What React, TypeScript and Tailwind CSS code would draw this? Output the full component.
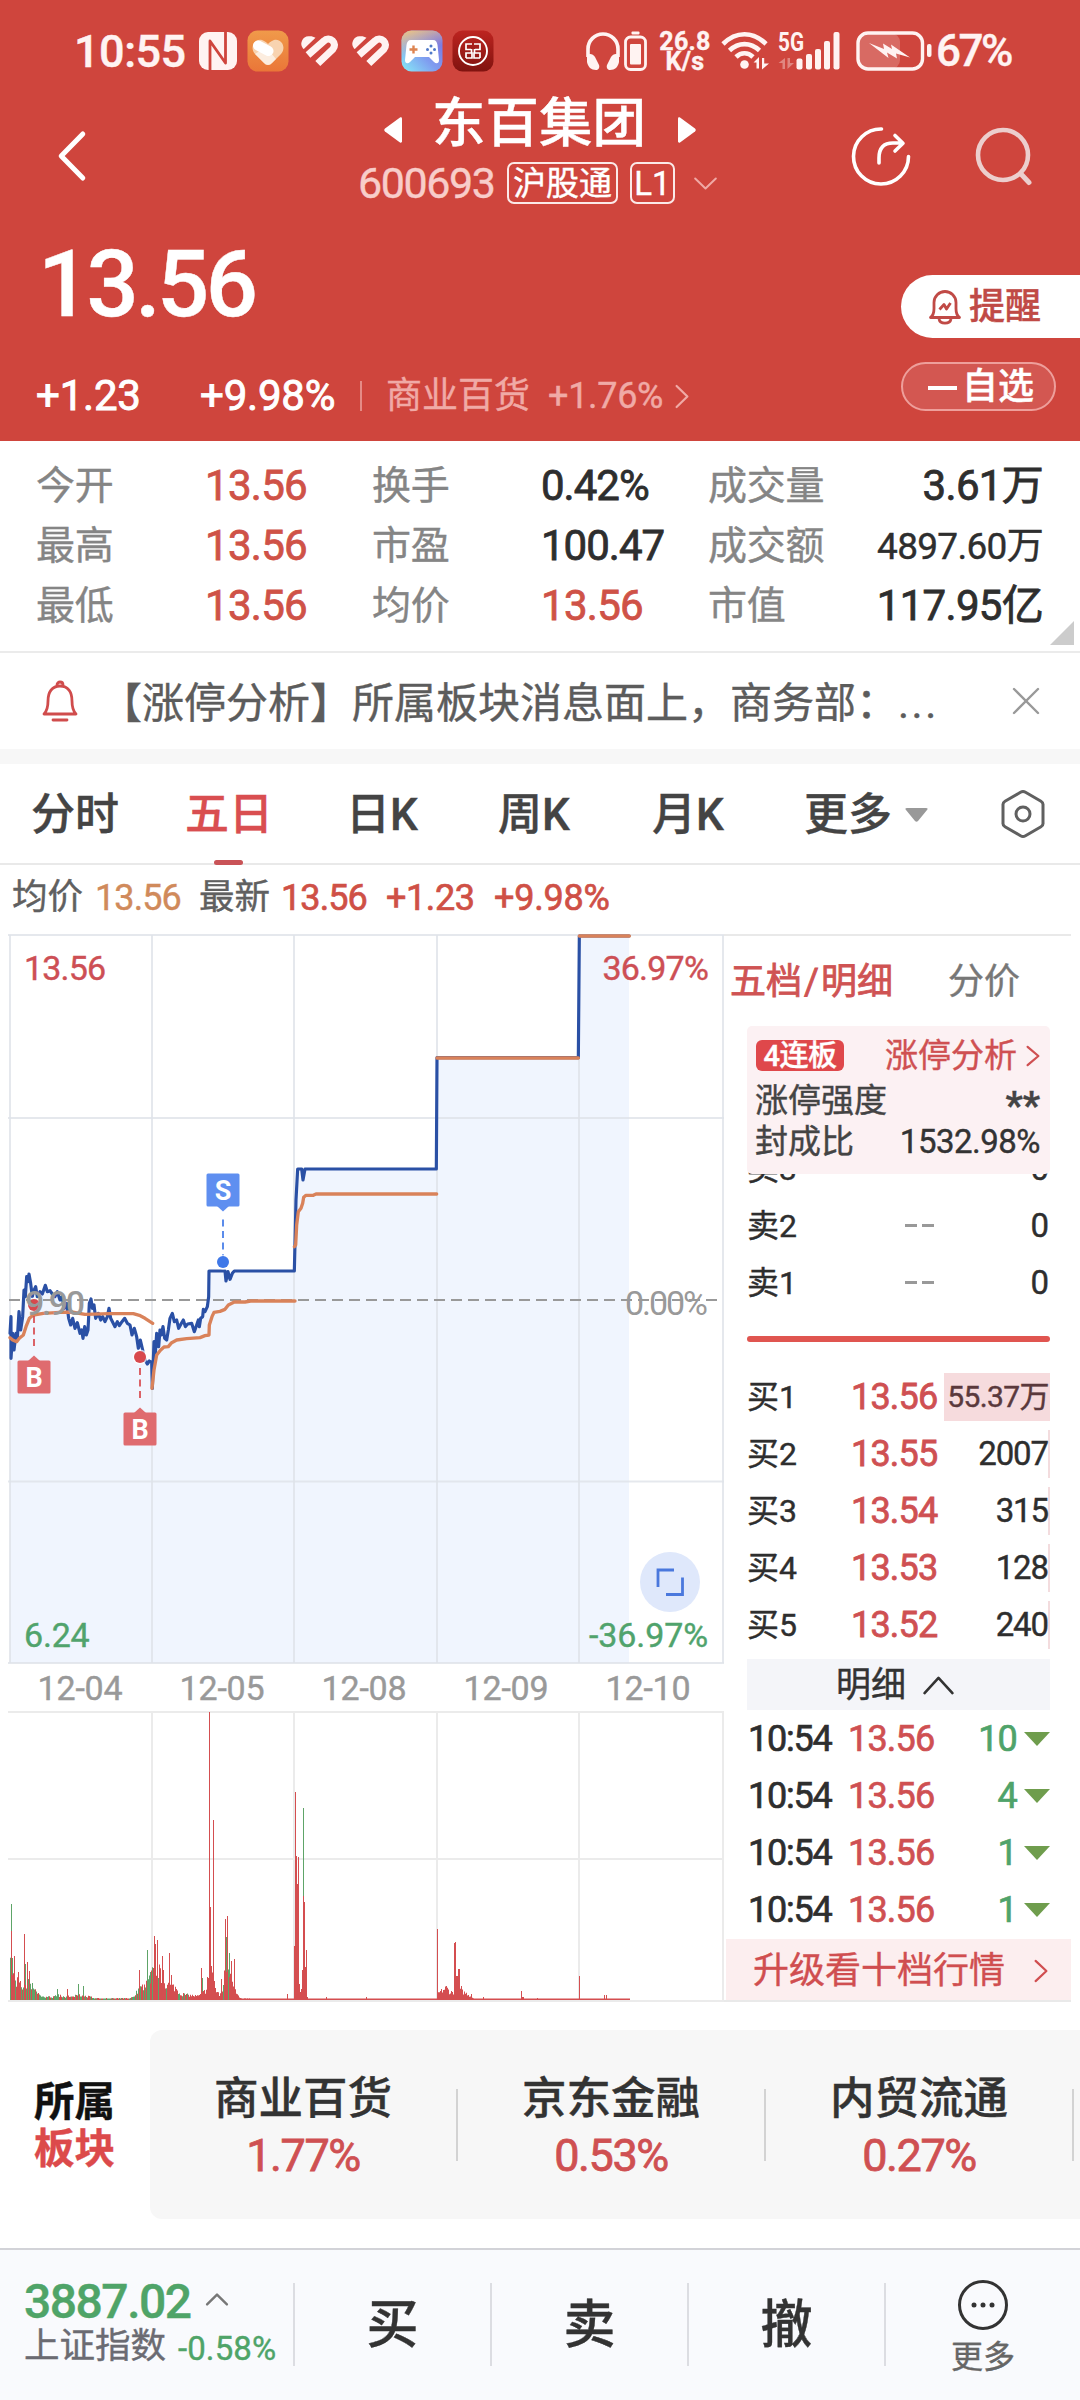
import React from "react";

/* ---------- status bar icons ---------- */

function NfcIcon() {
  return (
    <svg className="ml-[2px] h-[40px] w-[40px]" viewBox="0 0 40 40">
      <rect x="1" y="1" width="38" height="38" rx="9" fill="#fff3f2" />
      <path d="M12 40V10l15.500 22V0" fill="none" stroke="#cf453d" strokeWidth="2.800" strokeLinejoin="round" />
    </svg>
  );
}

function HeartAppIcon() {
  return (
    <svg className="ml-[9px] h-[42px] w-[42px]" viewBox="0 0 42 42">
      <defs>
        <linearGradient id="or" x1="0" y1="0" x2="0" y2="1">
          <stop offset="0" stopColor="#f09a4a" />
          <stop offset="1" stopColor="#ea7638" />
        </linearGradient>
      </defs>
      <rect x="0.500" y="0.500" width="41" height="41" rx="10" fill="url(#or)" />
      <path d="M21 35c-2 0-3-1-4-2L8 24c-6-7 0-16 7-14 3 1 5 3 6 4 1-1 3-3 6-4 7-2 13 7 7 14l-9 9c-1 1-2 2-4 2z" fill="#f8d3b0" />
      <path d="M8 24l9 9c2.500 2.500 5.500 2.500 8 0l4-4-10-12z" fill="#fff" opacity="0.600" />
      <path d="M11 15.500L21.500 21" stroke="#fff" strokeWidth="10" strokeLinecap="round" />
    </svg>
  );
}

function StripeHeart({ className }: { className: string }) {
  return (
    <svg className={className} viewBox="0 0 38 32">
      <path d="M2 13.500A7.500 7.500 0 0 1 7.500 1.300C10 0.800 12.500 1.500 14.500 2.800L2.800 14z" fill="#fff3f2" />
      <path d="M7 20L23 6A5.800 5.800 0 0 1 31.800 14.300L16.800 28.500" fill="none" stroke="#fff3f2" strokeWidth="7.200" />
    </svg>
  );
}

function GameIcon() {
  return (
    <svg className="ml-[11px] h-[42px] w-[42px]" viewBox="0 0 42 42">
      <defs>
        <linearGradient id="gm" x1="0.100" y1="1" x2="0.900" y2="0.200">
          <stop offset="0" stopColor="#86e4f6" />
          <stop offset="0.500" stopColor="#7f9df0" />
          <stop offset="1" stopColor="#7a78e2" />
        </linearGradient>
        <linearGradient id="gt" x1="0" y1="0" x2="0.300" y2="1">
          <stop offset="0" stopColor="#f3c67a" />
          <stop offset="0.600" stopColor="#eec49a" stopOpacity="0" />
        </linearGradient>
      </defs>
      <rect x="0.500" y="0.500" width="41" height="41" rx="10" fill="url(#gm)" />
      <rect x="0.500" y="0.500" width="41" height="41" rx="10" fill="url(#gt)" />
      <path d="M10 10h22c3 0 4 2 4.500 5L38 30c0 4-3 4-5 2l-5-5H14l-5 5c-2 2-5 2-5-2l1.500-15C6 12 7 10 10 10z" fill="#fff" />
      <path d="M12.500 15.500v8M8.500 19.500h8" stroke="#dd8450" strokeWidth="2.400" />
      <g fill="#4f78c8">
        <circle cx="30" cy="16" r="1.500" />
        <circle cx="30" cy="23" r="1.500" />
        <circle cx="26.500" cy="19.500" r="1.500" />
        <circle cx="33.500" cy="19.500" r="1.500" />
      </g>
    </svg>
  );
}

function BankIcon() {
  return (
    <svg className="ml-[9px] h-[42px] w-[42px]" viewBox="0 0 42 42">
      <defs>
        <linearGradient id="bk" x1="0" y1="0" x2="0" y2="1">
          <stop offset="0" stopColor="#bd2420" />
          <stop offset="1" stopColor="#80130f" />
        </linearGradient>
      </defs>
      <rect x="0.500" y="0.500" width="41" height="41" rx="10" fill="url(#bk)" />
      <circle cx="21" cy="21" r="14" fill="none" stroke="#fff" strokeWidth="1.900" />
      <path d="M20 14h-6v5.500h5M14 28h6v-5h-6v5M22 14h6v5.500h-5M28 28h-6v-5h6v5M19.500 19v4M22.500 19v4" fill="none" stroke="#fff" strokeWidth="1.700" />
    </svg>
  );
}

function StatusRight() {
  return (
    <>
      <svg className="ml-[91px] h-[40px] w-[36px]" viewBox="0 0 36 40">
        <path d="M3 26V18a15 15 0 0 1 30 0v8" fill="none" stroke="#fff3f2" strokeWidth="3.600" />
        <path d="M2 24c3-2 6-1 8 2l4 8c1 3-1 5-3 5-5 0-8-3-9-8z" fill="#fff3f2" />
        <path d="M34 24c-3-2-6-1-8 2l-4 8c-1 3 1 5 3 5 5 0 8-3 9-8z" fill="#fff3f2" />
      </svg>
      <svg className="ml-[3px] h-[40px] w-[23px]" viewBox="0 0 23 40">
        <rect x="7.500" y="0.500" width="8" height="3" rx="1" fill="#fff3f2" />
        <rect x="1.500" y="6" width="20" height="32.500" rx="5" fill="none" stroke="#fff3f2" strokeWidth="2.800" />
        <rect x="6" y="13" width="11" height="20.500" rx="1" fill="#fff3f2" />
      </svg>
      <div className="ml-[11px] w-[54px] pt-[2px] text-center text-[25px] font-bold leading-[20px] tracking-[0.300px] text-[#fff3f2]">
        <div>26.8</div>
        <div>K/s</div>
      </div>
      <svg className="ml-[8px] h-[40px] w-[50px]" viewBox="0 0 50 40">
        <g fill="none" stroke="#fff3f2" strokeWidth="4.600">
          <path d="M3 13C16 0 33 0 46 13" />
          <path d="M9.500 19.500c9-8.500 21-8.500 30 0" />
          <path d="M16 26c5-5 12-5 17 0" />
        </g>
        <circle cx="24.500" cy="33.500" r="4.300" fill="#fff3f2" />
        <path d="M39 26v11.500h-2.500v-6H33.500zM42 38.500V27h2.200v5.500H49z" fill="#fff3f2" />
      </svg>
      <svg className="ml-[8px] h-[40px] w-[64px]" viewBox="0 0 64 40">
        <text x="0" y="19.500" fontSize="25" fontWeight="700" textLength="26" lengthAdjust="spacingAndGlyphs" fill="#fff3f2">
          5G
        </text>
        <g fill="#fff3f2">
          <rect x="18.500" y="27.500" width="6" height="11" rx="2" />
          <rect x="28" y="23" width="6" height="15.500" rx="2" />
          <rect x="37" y="18" width="6" height="20.500" rx="2" />
          <rect x="46" y="10" width="6" height="28.500" rx="2" />
          <rect x="55.500" y="1" width="6" height="37.500" rx="2" />
        </g>
        <path d="M7 27v11H4.500v-6H0.500zM9.500 38V27H12v5h4z" fill="#fff" opacity="0.350" />
      </svg>
      <svg className="ml-[14px] h-[40px] w-[78px]" viewBox="0 0 78 40">
        <rect x="2" y="2" width="42" height="36" rx="9" fill="#fff" opacity="0.200" />
        <rect x="2" y="2" width="64.500" height="36" rx="10" fill="none" stroke="#fff3f2" strokeWidth="3.400" />
        <rect x="71" y="13" width="4.500" height="13" rx="2" fill="#fff3f2" />
        <path d="M13 12l15 6-1-5.500 9 5.500-1-4.500 19 13-14-4 1 5-10-6 1.500 5.500z" fill="#fff3f2" />
      </svg>
      <span className="ml-[2px] text-[44px] font-medium leading-none tracking-[-2.500px] text-[#fff3f2]">67%</span>
    </>
  );
}

/* ---------- small glyphs ---------- */

function Chevron({ className, dir, sw = 2.5 }: { className: string; dir: "up" | "down" | "left" | "right"; sw?: number }) {
  const pts = {
    up: "5,95 50,5 95,95",
    down: "5,5 50,95 95,5",
    left: "95,4 5,50 95,96",
    right: "5,4 95,50 5,96",
  }[dir];
  return (
    <svg className={className} viewBox="0 0 100 100" preserveAspectRatio="none" overflow="visible">
      <polyline points={pts} fill="none" stroke="currentColor" strokeWidth={sw} strokeLinecap="round" strokeLinejoin="round" vectorEffect="non-scaling-stroke" />
    </svg>
  );
}

/* ---------- red header ---------- */

function Header() {
  return (
    <header className="h-[441px] bg-[#cf453d] text-white">
      <div className="flex h-[84px] items-center pl-[74px] pt-[18px]">
        <span className="w-[122px] text-[45px] font-medium leading-none tracking-[-0.500px] text-[#fff3f2]">10:55</span>
        <NfcIcon />
        <HeartAppIcon />
        <StripeHeart className="ml-[12px] h-[32px] w-[38px]" />
        <StripeHeart className="ml-[13px] h-[32px] w-[38px]" />
        <GameIcon />
        <BankIcon />
        <StatusRight />
      </div>

      <div className="flex h-[144px] items-center">
        <Chevron dir="left" sw={5} className="ml-[60px] h-[48px] w-[24px]" />
        <div className="ml-[274px] h-[144px] w-[362px]">
          <div className="flex h-[74px] items-center">
            <svg className="ml-[26px] mt-[36px] h-[26px] w-[18px] -translate-y-[9px]" viewBox="0 0 18 26">
              <path d="M18 1.500v23c0 1-1 1.500-2 1L1 14.500c-1-1-1-2 0-3L16 .5c1-.5 2 0 2 1z" fill="#fff" />
            </svg>
            <span className="ml-[30px] w-[216px] pt-[6px] text-[53.500px] font-medium leading-[74px]">东百集团</span>
            <svg className="ml-[30px] mt-[36px] h-[26px] w-[18px] -translate-y-[9px]" viewBox="0 0 18 26">
              <path d="M0 1.500v23c0 1 1 1.500 2 1l15-11c1-1 1-2 0-3L2 .5C1 0 0 .5 0 1.500z" fill="#fff" />
            </svg>
          </div>
          <div className="flex h-[50px] items-center">
            <span className="w-[149px] text-[43px] leading-none tracking-[-1.400px] text-[#f8cdca]">600693</span>
            <span className="flex h-[42px] w-[111px] items-center justify-center rounded-[7px] border-2 border-[#fbe9e8] text-[33px] leading-none">沪股通</span>
            <span className="ml-[12px] flex h-[42px] w-[45px] items-center justify-center rounded-[7px] border-2 border-[#fbe9e8] text-[33px] leading-none">L1</span>
            <Chevron dir="down" sw={2} className="ml-[19px] h-[11px] w-[23px] text-[#f0a9a5]" />
          </div>
        </div>
        <svg className="ml-[131px] h-[60px] w-[60px]" viewBox="0 0 60 60" fill="none" stroke="#fff" strokeWidth="3.600" strokeLinecap="round">
          <path d="M30.500 3A27.500 27.500 0 1 0 57.500 30.500" />
          <path d="M28 37v-5c0-10 5-15 14-15h9M44 9.500l8 7.700-8 7.800" strokeLinejoin="round" />
        </svg>
        <svg className="ml-[63px] h-[60px] w-[60px]" viewBox="0 0 60 60" fill="none" stroke="#eccecd" strokeWidth="4.600" strokeLinecap="round">
          <circle cx="29" cy="29" r="25" />
          <path d="M47 48l8 8.500" strokeWidth="5" />
        </svg>
      </div>

      <div className="flex h-[213px] justify-between">
        <div>
          <div className="flex h-[110px] items-center pl-[38px] pt-[3px]">
            <span className="text-[92px] font-medium leading-none tracking-[-3.700px]">13.56</span>
          </div>
          <div className="mt-[33px] flex h-[50px] items-center pl-[36px]">
            <span className="w-[164px] text-[42px] leading-none tracking-[-0.200px] [-webkit-text-stroke:0.900px]">+1.23</span>
            <span className="w-[160px] text-[42px] leading-none tracking-[-0.200px] [-webkit-text-stroke:0.900px]">+9.98%</span>
            <span className="h-[30px] w-[2px] bg-[#e58b86]" />
            <span className="ml-[24px] w-[162px] text-[36px] leading-none text-[#f0aaa6]">商业百货</span>
            <span className="w-[128px] text-[36px] leading-none tracking-[-0.300px] text-[#f0aaa6]">+1.76%</span>
            <Chevron dir="right" sw={2.2} className="h-[23px] w-[12px] text-[#f0aaa6]" />
          </div>
        </div>
        <div className="w-[179px] pt-[47px]">
          <div className="flex h-[63px] w-[179px] items-center rounded-l-full bg-white pl-[27px]">
            <svg className="h-[36px] w-[34px]" viewBox="0 0 34 36" fill="none" stroke="#c04a46" strokeWidth="2.800" strokeLinejoin="round">
              <path d="M2.500 28.500c3-2 3.500-5 3.500-9V13.500a11 11 0 0 1 22 0v6c0 4 .5 7 3.500 9z" />
              <path d="M11 30c1 5.500 11 5.500 12 0" />
              <path d="M11.500 20.500l4.500-5 2.500 4.500 4-6" />
            </svg>
            <span className="ml-[7px] pt-px text-[36px] font-medium leading-none text-[#c04a46]">提醒</span>
          </div>
          <div className="mt-[24px] flex h-[49px] w-[155px] items-center rounded-full border-2 border-[#ee9f9b] bg-[#d35751] pl-[25px]">
            <span className="mr-[5px] mt-[2px] h-[4px] w-[29px] bg-white" />
            <span className="pt-px text-[36px] font-medium leading-none">自选</span>
          </div>
        </div>
      </div>
    </header>
  );
}

/* ---------- key figures ---------- */

const FIGURES = [
  ["今开", "13.56", true, "换手", "0.42%", false, "成交量", "3.61万"],
  ["最高", "13.56", true, "市盈", "100.47", false, "成交额", "4897.60万"],
  ["最低", "13.56", true, "均价", "13.56", true, "市值", "117.95亿"],
] as const;

function Figures() {
  return (
    <section className="relative h-[212px] border-b-2 border-[#ebebeb] bg-white pt-[15px]">
      {FIGURES.map((r, i) => (
        <div key={i} className="flex h-[60px] items-center pl-[36px] pr-[37px] text-[42px] leading-none tracking-[-1px] text-[#2e2e2e]">
          <span className="w-[169px] pt-px text-[39px] tracking-[-0.300px] text-[#858585]">{r[0]}</span>
          <span className={"w-[167px] tracking-[-0.700px] text-[#cf5247] [-webkit-text-stroke:0.800px]"}>{r[1]}</span>
          <span className="w-[169px] pt-px text-[39px] tracking-[-0.300px] text-[#858585]">{r[3]}</span>
          <span className={r[5] ? "w-[167px] tracking-[-0.700px] text-[#cf5247] [-webkit-text-stroke:0.800px]" : "w-[167px] [-webkit-text-stroke:0.800px]"}>{r[4]}</span>
          <span className="pt-px text-[39px] tracking-[-0.300px] text-[#858585]">{r[6]}</span>
          <span className={i === 1 ? "ml-auto text-[37px] tracking-[-0.700px]" : "ml-auto tracking-[-0.700px] [-webkit-text-stroke:0.800px]"}>{r[7]}</span>
        </div>
      ))}
      <svg className="absolute bottom-[6px] right-[6px] h-[24px] w-[24px]" viewBox="0 0 24 24">
        <path d="M24 0v24H0z" fill="#ccc" />
      </svg>
    </section>
  );
}

function Notice() {
  return (
    <section className="flex h-[96px] items-center bg-white">
      <svg className="ml-[42px] h-[42px] w-[36px]" viewBox="0 0 36 42" fill="none" stroke="#d04c4c" strokeWidth="2.800" strokeLinejoin="round" strokeLinecap="round">
        <path d="M2 34c3-3 4-6 4-13 0-9 4-15 12-15s12 6 12 15c0 7 1 10 4 13z" />
        <path d="M15 5c0-4 6-4 6 0M11 40h14" />
      </svg>
      <span className="ml-[22px] w-[864px] whitespace-nowrap pt-[5px] text-[42px] leading-none text-[#5c5c5c]">
        【涨停分析】所属板块消息面上，商务部：<span className="tracking-[2.500px]">...</span>
      </span>
      <svg className="ml-[48px] h-[28px] w-[28px]" viewBox="0 0 28 28" stroke="#999" strokeWidth="2.400" strokeLinecap="round">
        <path d="M2 2l24 24M26 2L2 26" />
      </svg>
    </section>
  );
}

function Tabs() {
  return (
    <nav className="h-[116px] border-b-2 border-t-[15px] border-b-[#e9e9e9] border-t-[#f7f7f7] bg-white">
      <div className="flex h-[99px] items-center pl-[31px] text-[44px] font-medium leading-none text-[#444]">
        <span className="w-[154px] pt-[2px]">分时</span>
        <span className="relative w-[161px] pt-[2px] text-[#d94e50]">
          五日
          <span className="absolute -bottom-[28px] left-[29px] h-[5px] w-[29px] rounded bg-[#c95357]" />
        </span>
        <span className="w-[152px] pt-[2px]">日K</span>
        <span className="w-[154px] pt-[2px]">周K</span>
        <span className="w-[152px] pt-[2px]">月K</span>
        <span className="w-[101px] pt-[2px]">更多</span>
        <svg className="mt-[2px] h-[14px] w-[23px]" viewBox="0 0 23 14">
          <path d="M2 0h19c2 0 2 1 1 2l-9 11c-1 1-2 1-3 0L1 2C0 1 0 0 2 0z" fill="#999" />
        </svg>
        <svg className="ml-[73px] h-[48px] w-[44px]" viewBox="0 0 44 48" fill="none" stroke="#606060" strokeWidth="3">
          <path d="M19.500 2.300a5 5 0 0 1 5 0l15.500 9a4 4 0 0 1 2 4v17.400a4 4 0 0 1-2 4l-15.500 9a5 5 0 0 1-5 0l-15.500-9a4 4 0 0 1-2-4V15.300a4 4 0 0 1 2-4z" />
          <circle cx="22" cy="24" r="7" />
        </svg>
      </div>
    </nav>
  );
}

/* ---------- intraday price chart ---------- */

const PRICE =
  "30,700 33,650 33,775 38,700 42,750 48,700 52,715 57,635 62,690 68,650 72,570 76,590 80,530 84,545 87,522 92,550 97,590 100,575 107,560 112,590 120,575 127,582 136,556 142,575 150,572 157,582 165,590 172,575 180,600 186,590 193,625 200,610 206,655 212,675 218,655 225,685 232,668 240,700 245,690 249,715 254,680 259,705 264,690 268,610 273,597 277,625 282,615 287,655 295,640 302,660 308,650 315,665 322,650 327,625 332,655 345,680 352,665 358,677 366,665 374,655 382,670 390,675 396,705 403,685 410,710 415,745 421,720 428,750 430,765 438,785 442,792 448,783 455,787 457,865 462,725 466,760 470,700 476,740 480,690 484,705 489,680 494,715 500,720 505,690 510,655 517,640 523,665 530,660 536,685 543,672 550,660 556,680 563,672 575,670 583,695 590,675 595,660 598,680 602,655 608,650 610,628 615,635 622,620 626,590 627,513 675,513 678,543 684,515 690,538 697,520 703,513 883,513 885,430 888,300 893,207 905,207 909,240 915,207 1309,207 1311,-127 1735,-127 1738,-492 1887,-492";

const AVERAGES = [
  "30,713 38,720 50,725 58,715 70,705 78,680 88,655 100,645 130,640 180,637 215,636 255,643 330,641 400,641 418,646 435,655 450,665 458,670",
  "456,865 462,810 470,765 482,750 492,741 505,740 515,728 530,720 560,716 600,713 615,707 627,705 628,675 636,650 642,637 660,634 675,628 685,615 703,606 735,606 752,603 885,603",
  "883,440 887,435 890,375 895,335 903,325 908,310 911,292 918,286 940,286 948,282 1310,282",
  "1311,-126 1735,-126",
  "1738,-492 1888,-492",
];

function Marker({ x, dot, box, label, color, fill, up }: { x: number; dot: number; box: number; label: string; color: string; fill: string; up?: boolean }) {
  const tip = up ? box - 5 : box + 38;
  const edge = up ? box + 0.5 : box + 32.5;
  return (
    <g>
      <line x1={x} x2={x} y1={up ? dot + 11 : tip + 8} y2={up ? tip - 5 : dot - 4} stroke={color} strokeWidth="2" strokeDasharray="7 4.500" opacity="0.850" />
      <circle cx={x} cy={dot} r="7.500" fill="#fff" opacity="0.700" />
      <circle cx={x} cy={dot} r="6" fill={color} />
      <rect x={x - 16.5} y={box} width="33" height="33" rx="1.500" fill={fill} />
      <path d={`M${x - 6} ${edge}L${x} ${tip}L${x + 6} ${edge}z`} fill={fill} />
      <text x={x} y={box + 26} textAnchor="middle" fontSize="27" fontWeight="700" fill="#fff" stroke="none">
        {label}
      </text>
    </g>
  );
}

function PriceChart() {
  return (
    <div className="relative h-[730px] w-[716px]">
      <svg className="block h-[730px] w-[716px]" viewBox="8 934 716 730">
        <rect x="9" y="935" width="714" height="728" fill="#fff" />
        <g transform="translate(0 1100) scale(0.333333)">
          <polygon points={"30,1689 " + PRICE + " 1887,1689"} fill="#f0f5fe" />
        </g>
        <g stroke="#dfe2e8" strokeOpacity="0.800" strokeWidth="2">
          {[10, 152, 294, 437, 579, 723].map((x) => (
            <line key={x} x1={x} x2={x} y1="935" y2="1663" />
          ))}
          {[935, 1118, 1481.5, 1663].map((y) => (
            <line key={y} x1="8" x2="724" y1={y} y2={y} />
          ))}
        </g>
        <text x="708" y="1314.500" textAnchor="end" textLength="83" fontSize="34" fill="#999">
          0.00%
        </text>
        <line x1="9" x2="723" y1="1300" y2="1300" stroke="#999" strokeWidth="2" strokeDasharray="11 6" />
        <g transform="translate(0 1100) scale(0.333333)" fill="none" strokeLinejoin="round" strokeLinecap="round">
          <polyline points={PRICE} stroke="#2a50a5" strokeWidth="9.500" />
          {AVERAGES.map((p) => (
            <polyline key={p} points={p} stroke="#d9825a" strokeWidth="10" />
          ))}
        </g>
        <Marker x={34} dot={1305} box={1360.5} label="B" color="#d8494d" fill="#df6b6f" up />
        <Marker x={140} dot={1357} box={1412.5} label="B" color="#d8494d" fill="#df6b6f" up />
        <Marker x={223} dot={1262} box={1173.5} label="S" color="#3f78e8" fill="#5f8ff0" />
        <text x="25" y="1314.500" fontSize="34" fontWeight="500" fill="#999" textLength="60">
          9.90
        </text>
      </svg>
      <div className="absolute inset-0 flex flex-col justify-between pb-[12px] pl-[16px] pr-[16px] pt-[17px] text-[34px] leading-[34px]">
        <div className="flex justify-between text-[#cd4f55]">
          <span className="tracking-[-0.800px]">13.56</span>
          <span className="tracking-[-0.800px]">36.97%</span>
        </div>
        <div className="flex justify-between text-[#50a36c]">
          <span className="tracking-[-0.200px]">6.24</span>
          <span className="tracking-[-0.100px]">-36.97%</span>
        </div>
      </div>
      <div className="absolute bottom-[52px] right-[24px] flex h-[60px] w-[60px] items-center justify-center rounded-full bg-[#dfe8fb]">
        <svg className="h-[28px] w-[28px]" viewBox="0 0 28 28" fill="none" stroke="#4a78dd" strokeWidth="2.800">
          <path d="M18 2H2v17M10 26.500h16.500V9.500" />
        </svg>
      </div>
    </div>
  );
}

/* ---------- volume chart ---------- */

const ENVELOPE: [number, number][] = [
  [10, 44], [12, 38], [16, 25], [20, 20], [25, 16], [28, 22], [33, 16], [36, 9], [42, 4], [52, 4], [58, 6], [64, 4], [80, 6], [90, 4], [100, 2],
  [130, 2], [135, 8], [140, 16], [147, 22], [152, 35], [157, 45], [162, 24], [168, 20], [175, 16], [180, 8], [190, 6], [198, 5], [205, 12],
  [209, 32], [213, 37], [215, 14], [219, 6], [222, 14], [225, 40], [229, 42], [233, 24], [236, 8], [240, 2], [293, 1], [437, 1], [438, 9],
  [446, 16], [450, 10], [460, 12], [467, 8], [474, 1.5], [519, 1], [522, 4], [525, 1.5], [579, 1], [629, 1],
];

const SPIKES: [number, number, 0 | 1][] = [
  [11, 96, 0], [11, 69, 1], [12, 42, 0], [14, 44, 1], [18, 28, 1], [24, 66, 1], [25, 36, 0], [27, 38, 1], [29, 29, 1], [32, 17, 0], [57, 11, 0],
  [67, 11, 1], [78, 16, 0], [83, 14, 0], [139, 30, 1], [147, 50, 0], [150, 28, 0], [154, 64, 1], [155, 56, 1], [157, 60, 1], [162, 44, 1], [163, 30, 1],
  [169, 47, 1], [171, 25, 1], [201, 32, 1], [202, 22, 0], [207, 23, 1], [209, 288, 1], [210, 93, 1], [211, 34, 1], [213, 180, 1], [221, 21, 1],
  [225, 81, 1], [226, 63, 0], [227, 84, 1], [229, 47, 0], [231, 39, 1], [234, 41, 1], [287, 6, 1], [294, 54, 1], [295, 208, 1], [296, 144, 1],
  [297, 116, 1], [298, 143, 1], [299, 16, 1], [300, 8, 1], [301, 11, 1], [302, 30, 1], [303, 192, 0], [303, 104, 1], [304, 98, 1], [305, 33, 1],
  [306, 50, 1], [307, 3, 1], [326, 3, 1], [366, 3, 1], [437, 71, 1], [454, 57, 1], [455, 58, 1], [456, 24, 1], [457, 24, 1], [458, 31, 1],
  [459, 31, 1], [461, 14, 1], [471, 6, 1], [483, 3, 1], [521, 9, 1], [537, 2, 1], [579, 24, 1], [604, 5, 1], [606, 5, 1],
];

function buildVolume() {
  let seed = 7;
  const rnd = () => {
    seed = (seed * 16807) % 2147483647;
    return seed / 2147483647;
  };
  const paths = ["", ""];
  const add = (x: number, h: number, c: number) => {
    paths[c] += `M${x} 2000h1v-${h.toFixed(1)}h-1z`;
  };
  let k = 0;
  for (let x = 10; x < 630; x++) {
    while (k < ENVELOPE.length - 2 && ENVELOPE[k + 1][0] <= x) k++;
    const [x0, h0] = ENVELOPE[k];
    const [x1, h1] = ENVELOPE[k + 1];
    const h = h0 + ((h1 - h0) * (x - x0)) / (x1 - x0);
    const green = (x < 153 && rnd() < 0.5) || (x < 236 && rnd() < 0.15);
    add(x, Math.max(1.5, h * (0.5 + 0.5 * rnd())), green ? 0 : 1);
  }
  SPIKES.forEach(([x, h, c]) => add(x, h, c));
  return paths;
}

const VOLUME = buildVolume();

function VolumeChart() {
  return (
    <svg className="block h-[291px] w-[716px]" viewBox="8 1711 716 291">
      <g stroke="#ebebeb" strokeWidth="2">
        {[152, 294, 437, 579, 723].map((x) => (
          <line key={x} x1={x} x2={x} y1="1712" y2="2001" />
        ))}
        {[1712, 1859, 2001].map((y) => (
          <line key={y} x1="8" x2="724" y1={y} y2={y} />
        ))}
      </g>
      <path d={VOLUME[0]} fill="#5ea468" />
      <path d={VOLUME[1]} fill="#d44e50" />
    </svg>
  );
}

/* ---------- order book ---------- */

const ASKS = [
  ["卖3", "0"],
  ["卖2", "0"],
  ["卖1", "0"],
];
const BIDS = [
  ["买1", "13.56", "55.37万"],
  ["买2", "13.55", "2007"],
  ["买3", "13.54", "315"],
  ["买4", "13.53", "128"],
  ["买5", "13.52", "240"],
];
const TICKS = ["10", "4", "1", "1"];

function OrderBook() {
  return (
    <aside className="h-[1068px] w-[347px] border-b-2 border-t-2 border-[#e9e9e9]">
      <div className="flex h-[90px] items-center pl-[6px] pt-px text-[36px] leading-none">
        <span className="w-[218px] text-[#cf5353] [-webkit-text-stroke:0.800px]">
          五档<span className="mx-[2px]">/</span>明细
        </span>
        <span className="text-[#777]">分价</span>
      </div>
      <div className="ml-[23px] w-[303px]">
        <div className="relative z-10 h-[148px] rounded-[5px] bg-[#fcf1f3] pl-[8px] pr-[10px] pt-[7px] text-[33px] leading-none text-[#444]">
          <div className="flex h-[45px] items-center justify-between text-[#cf5052]">
            <span className="ml-px flex h-[31px] w-[88px] items-center justify-center rounded-[6px] bg-[#df484b] text-[29px] font-medium leading-[28px] tracking-[-0.500px] text-white">4连板</span>
            <span className="flex items-center">
              涨停分析
              <Chevron dir="right" sw={2.2} className="ml-[10px] mr-px h-[20px] w-[12px]" />
            </span>
          </div>
          <div className="flex h-[44px] items-center justify-between">
            <span>涨停强度</span>
            <span className="mt-[11px] text-[38px] font-bold leading-[30px]">**</span>
          </div>
          <div className="flex h-[38px] items-center justify-between">
            <span>封成比</span>
            <span className="text-[33px] tracking-[-0.500px] text-[#333]">1532.98%</span>
          </div>
        </div>
        <div className="-mt-[34px]">
          {ASKS.map((r) => (
            <div key={r[0]} className="flex h-[57px] items-center pr-px text-[32px] leading-none text-[#2e2e2e]">
              <span className="w-[158px]">{r[0]}</span>
              <span className="flex gap-[5px]">
                <span className="h-[3px] w-[12px] bg-[#999]" />
                <span className="h-[3px] w-[12px] bg-[#999]" />
              </span>
              <span className="ml-auto text-[33px]">{r[1]}</span>
            </div>
          ))}
        </div>
        <div className="mt-[25px] h-[6px] rounded-full bg-[#e05550]" />
        <div className="mt-[26px]">
          {BIDS.map((r, i) => (
            <div key={r[0]} className="flex h-[57px] items-center text-[32px] leading-none text-[#2e2e2e]">
              <span className="w-[104px]">{r[0]}</span>
              <span className="w-[93px] text-[36px] tracking-[-0.800px] text-[#cf5052] [-webkit-text-stroke:0.800px]">{r[1]}</span>
              {i === 0 ? (
                <span className="flex h-[48px] flex-1 items-center justify-end whitespace-nowrap bg-[#f6dbdd] pr-px text-[30px] tracking-[-0.600px] text-[#5a393c]">{r[2]}</span>
              ) : (
                <span className="flex h-[48px] flex-1 items-center justify-end border-r-2 border-[#f3dcde] text-[33px] tracking-[-1.100px]">{r[2]}</span>
              )}
            </div>
          ))}
        </div>
        <div className="mt-[6px] flex h-[51px] items-center bg-[#f4f5f9] pl-[89px] pt-px text-[35px] leading-none text-[#333]">
          明细
          <Chevron dir="up" sw={2.6} className="ml-[17px] h-[17px] w-[31px]" />
        </div>
        {TICKS.map((n, i) => (
          <div key={i} className="flex h-[57px] items-center text-[36px] leading-none tracking-[-0.800px] [-webkit-text-stroke:0.700px]">
            <span className="w-[101px] pl-px tracking-[-1.200px] text-[#2e2e2e]">10:54</span>
            <span className="w-[90px] text-[#cf5052]">13.56</span>
            <span className="w-[79px] text-right text-[#4fa36a]">{n}</span>
            <svg className="ml-auto h-[14px] w-[26px]" viewBox="0 0 26 14">
              <path d="M0 0h26L13 14z" fill="#6f9d4d" />
            </svg>
          </div>
        ))}
      </div>
      <div className="ml-[2px] mt-px flex h-[61px] items-center bg-[#fceeef] pl-[27px] pt-[2px] text-[36px] leading-none text-[#d04e50]">
        升级看十档行情
        <Chevron dir="right" sw={2.2} className="ml-[30px] h-[22px] w-[12px]" />
      </div>
    </aside>
  );
}

/* ---------- lower sections ---------- */

const SECTORS = [
  ["商业百货", "1.77%"],
  ["京东金融", "0.53%"],
  ["内贸流通", "0.27%"],
];

function Sectors() {
  return (
    <section className="flex h-[246px] bg-white pt-[28px]">
      <div className="w-[150px] pl-[34px] pt-[49px] text-[40.500px] font-bold leading-[47px] text-[#111]">
        <div>所属</div>
        <div className="text-[#dc4a4b]">板块</div>
      </div>
      <div className="flex h-[189px] flex-1 items-center overflow-hidden rounded-l-[12px] bg-[#f7f7f7]">
        {SECTORS.map((s) => (
          <div key={s[0]} className="flex w-[308px] shrink-0 items-center">
            <div className="flex w-[306px] flex-col items-center pt-[4px]">
              <span className="text-[44.500px] font-medium leading-[58px] text-[#333]">{s[0]}</span>
              <span className="text-[45px] leading-[56px] tracking-[-1.400px] text-[#cf5052] [-webkit-text-stroke:0.800px]">{s[1]}</span>
            </div>
            <span className="h-[72px] w-[2px] bg-[#d3d3d3]" />
          </div>
        ))}
      </div>
    </section>
  );
}

function BottomBar() {
  return (
    <footer className="flex h-[152px] items-start border-t-2 border-[#d2d3d8] bg-[#f9fafd] pt-[33px]">
      <div className="w-[293px] pl-[24px] text-[#4fa468]">
        <div className="flex h-[37px] items-center pt-px">
          <span className="text-[48px] font-medium leading-none tracking-[-1.500px]">3887.02</span>
          <Chevron dir="up" sw={2.4} className="-mt-[6px] ml-[15px] h-[11px] w-[22px] text-[#777]" />
        </div>
        <div className="mt-[7px] flex h-[40px] items-center">
          <span className="w-[154px] text-[35.500px] leading-none text-[#6b6b72]">上证指数</span>
          <span className="mt-[3px] whitespace-nowrap text-[33px] leading-none tracking-[0.100px]">-0.58%</span>
        </div>
      </div>
      {["买", "卖", "撤"].map((t) => (
        <div key={t} className="flex h-[83px] w-[197px] items-center justify-center border-l-2 border-[#dcdde2] pt-[3px] text-[52px] font-medium leading-none text-[#333]">
          {t}
        </div>
      ))}
      <div className="flex h-[83px] flex-1 flex-col items-center border-l-2 border-[#dcdde2]">
        <svg className="-mt-[4px] h-[52px] w-[52px] shrink-0" viewBox="0 0 52 52">
          <circle cx="26" cy="26" r="23.500" fill="none" stroke="#333" strokeWidth="3" />
          <circle cx="17" cy="26" r="2.500" fill="#333" />
          <circle cx="26" cy="26" r="2.500" fill="#333" />
          <circle cx="35" cy="26" r="2.500" fill="#333" />
        </svg>
        <span className="mt-[8px] text-[32px] leading-[36px] text-[#666]">更多</span>
      </div>
    </footer>
  );
}

export default function App() {
  return (
    <div className="h-[2400px] w-[1080px] overflow-hidden bg-white font-['Roboto','Noto_Sans_CJK_SC',sans-serif] [-webkit-text-stroke:0.400px]" lang="zh-CN">
      <Header />
      <Figures />
      <Notice />
      <Tabs />
      <div className="flex h-[69px] items-center bg-white pb-[4px] pl-[12px] text-[36px] leading-none tracking-[-0.900px] text-[#606060]">
        <span className="w-[83px] text-[35.500px] tracking-normal">均价</span>
        <span className="w-[104px] text-[#d08a5b]">13.56</span>
        <span className="w-[82px] text-[35.500px] tracking-normal">最新</span>
        <span className="w-[105px] text-[#cf5046] [-webkit-text-stroke:0.700px]">13.56</span>
        <span className="w-[108px] tracking-[-0.400px] text-[#cf5046] [-webkit-text-stroke:0.700px]">+1.23</span>
        <span className="tracking-[-0.200px] text-[#cf5046] [-webkit-text-stroke:0.700px]">+9.98%</span>
      </div>
      <div className="flex pl-[8px]">
        <div className="w-[716px]">
          <PriceChart />
          <div className="grid h-[47px] w-[711px] grid-cols-5 items-center pl-px text-center text-[34px] leading-none tracking-[-0.200px] text-[#999]">
            {["12-04", "12-05", "12-08", "12-09", "12-10"].map((d) => (
              <span key={d}>{d}</span>
            ))}
          </div>
          <VolumeChart />
        </div>
        <OrderBook />
      </div>
      <Sectors />
      <BottomBar />
    </div>
  );
}
